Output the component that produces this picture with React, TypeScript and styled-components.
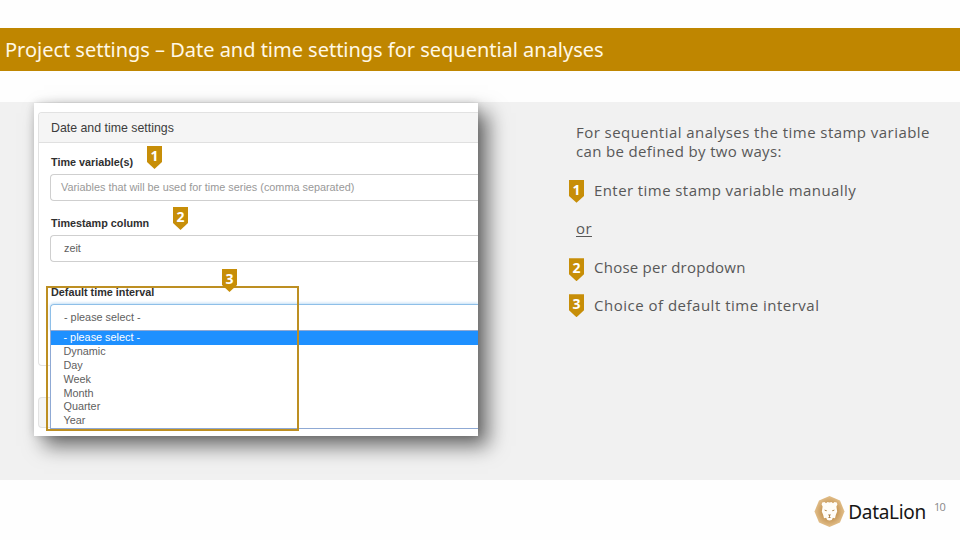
import React from 'react';
import styled, { createGlobalStyle } from 'styled-components';

const GlobalStyle = createGlobalStyle`
  *, *::before, *::after { box-sizing: border-box; }
  body { margin: 0; background: #fff; }
`;

const Slide = styled.main`
  display: flex;
  flex-direction: column;
  width: 960px;
  height: 540px;
  overflow: hidden;
  background: #fefefe;
  font-family: 'Open Sans', 'Noto Sans', sans-serif;
`;

const TitleBar = styled.header`
  display: flex;
  align-items: center;
  height: 43px;
  margin-top: 28px;
  padding: 0 0 0 5px;
  background: #bf8600;
`;

const Title = styled.h1`
  margin: 0;
  color: #fff8e6;
  font: 400 20px/28px 'Noto Sans', sans-serif;
  letter-spacing: -0.02px;
  white-space: nowrap;
`;

const Content = styled.section`
  display: flex;
  align-items: flex-start;
  height: 378px;
  margin-top: 31px;
  padding: 1px 0 0 34px;
  background: #f1f1f1;
`;

const Shot = styled.div`
  position: relative;
  flex: none;
  width: 444px;
  height: 333px;
  background: #fff;
  box-shadow: 10px 10px 19px 0 rgba(0, 0, 0, 0.56), 0 0 8px rgba(0, 0, 0, 0.14);
  font-family: 'Liberation Sans', Arial, sans-serif;
`;

const ShotBody = styled.div`
  display: flex;
  flex-direction: column;
  height: 100%;
  padding: 9px 0 0 4px;
  overflow: hidden;
`;

const Panel = styled.div`
  flex: none;
  height: 254px;
  border: 1px solid #e2e2e2;
  border-right: 0;
  border-radius: 4px 0 0 4px;
`;

const PanelHeader = styled.div`
  height: 30px;
  padding-left: 12px;
  border-bottom: 1px solid #e0e0e0;
  border-top-left-radius: 3px;
  background: #f5f5f5;
  color: #3c3c3c;
  font-size: 12.35px;
  line-height: 30px;
`;

const CollapsedPanel = styled.div`
  flex: none;
  height: 31px;
  margin-top: 31px;
  border: 1px solid #e2e2e2;
  border-right: 0;
  border-radius: 4px 0 0 4px;
  background: #f5f5f5;
`;

const Form = styled.form`
  display: flex;
  flex-direction: column;
  padding: 12px 0 0 12px;
`;

const Field = styled.div<{ $gap?: number }>`
  display: flex;
  flex-direction: column;
  margin-top: ${(p) => p.$gap ?? 0}px;
`;

const Label = styled.label`
  height: 14px;
  margin-bottom: 5px;
  color: #2f2f2f;
  font-size: 10.8px;
  font-weight: 700;
  line-height: 14px;
`;

const Control = styled.div<{ $tone?: 'placeholder' | 'focus' }>`
  height: 27px;
  margin-left: -1px;
  padding-left: ${(p) => (p.$tone === 'placeholder' ? 10 : 13)}px;
  border: 1px solid ${(p) => (p.$tone === 'focus' ? '#8ebfe8' : '#cfcfcf')};
  border-right: 0;
  border-radius: ${(p) => (p.$tone === 'focus' ? '4px 0 0 0' : '4px 0 0 4px')};
  box-shadow: ${(p) => (p.$tone === 'focus' ? '0 -1px 3px rgba(102, 175, 233, 0.4)' : 'none')};
  color: ${(p) => (p.$tone === 'placeholder' ? '#999' : '#606060')};
  font-size: 10.85px;
  line-height: 25px;
  white-space: nowrap;
`;

const Options = styled.ul`
  position: absolute;
  top: 227px;
  left: 16px;
  right: 0;
  height: 99px;
  margin: 0;
  padding: 0;
  border: solid #8fa9d4;
  border-width: 1px 0 1px 1px;
  background: #fff;
  list-style: none;
`;

const Option = styled.li<{ $selected?: boolean }>`
  height: ${(p) => (p.$selected ? 14.2 : 13.8)}px;
  padding-left: 12.5px;
  background: ${(p) => (p.$selected ? '#1e90ff' : 'transparent')};
  color: ${(p) => (p.$selected ? '#fff' : '#606060')};
  font-size: 10.85px;
  line-height: 13.5px;
`;

const Highlight = styled.div`
  position: absolute;
  top: 183px;
  left: 12px;
  width: 253px;
  height: 145px;
  border: 2px solid #bd8f22;
`;

const Marker = styled.span`
  display: flex;
  flex: none;
  justify-content: center;
  width: 15px;
  height: 23px;
  background: #c78e08;
  clip-path: polygon(0 0, 100% 0, 100% 70%, 50% 100%, 0 70%);
  color: #fff;
  font: 700 14px/20px 'Noto Sans', sans-serif;
`;

const PinnedMarker = styled(Marker)<{ $x: number; $y: number }>`
  position: absolute;
  top: ${(p) => p.$y}px;
  left: ${(p) => p.$x}px;
`;

const Notes = styled.div`
  display: flex;
  flex-direction: column;
  margin-left: 98px;
  padding-top: 20px;
  color: #585858;
  font-size: 15px;
  line-height: 19.4px;
`;

const Line = styled.p<{ $spacing: number }>`
  margin: 0;
  letter-spacing: ${(p) => p.$spacing}px;
  white-space: nowrap;
`;

const Step = styled.div<{ $gap: number }>`
  display: flex;
  gap: 10px;
  height: 19px;
  margin: ${(p) => p.$gap}px 0 0 -7px;
`;

const StepMarker = styled(Marker)<{ $lift?: number }>`
  margin-top: ${(p) => -(p.$lift ?? 0)}px;
`;

const Or = styled(Line)`
  margin-top: 19.5px;
  text-decoration: underline;
  text-underline-offset: 2px;
`;

const Footer = styled.footer`
  display: flex;
  align-items: flex-start;
  justify-content: flex-end;
  padding: 15px 15px 0 0;
`;

const Brand = styled.span`
  margin: 4px 0 0 3px;
  color: #161616;
  font: 400 19px/26px 'Noto Sans', sans-serif;
  letter-spacing: -0.3px;
`;

const PageNumber = styled.span`
  margin: 4px 0 0 8px;
  color: #888;
  font-size: 11px;
  letter-spacing: -0.8px;
  line-height: 16px;
`;

const LionLogo = () => (
  <svg width="31" height="33" viewBox="0 0 31 33" aria-hidden="true">
    <defs>
      <radialGradient id="mane">
        <stop offset="0.4" stopColor="#c2914f" />
        <stop offset="1" stopColor="#e3c08c" />
      </radialGradient>
    </defs>
    <path d="M15.5 1 26 5.5 30.5 16.5 26 27.5 15.5 32 5 27.5.5 16.5 5 5.5Z" fill="url(#mane)" />
    <path
      d="M8.2 7.6 10.5 7 12 8.2 13.5 7 15.5 7.6 17.5 7 19 8.2 20.5 7 22.8 7.6 23.4 9.6 22.4 11.6 23.2 16.5 21.8 20 21 23.2 18.9 22.8 17.7 25 15.5 25.6 13.3 25 12.1 22.8 10 23.2 9.2 20 7.8 16.5 8.6 11.6 7.6 9.6Z"
      fill="#fffdf8"
    />
    <path d="M10.4 14.4 13 15.4 12.6 16.3 10.9 15.7ZM20.6 14.4 18 15.4 18.4 16.3 20.1 15.7Z" fill="#b0884f" />
    <path d="M14 19.6h3l-1.1 1.4v1l1.3.5-1.7.4-1.7-.4 1.3-.5v-1Z" fill="#a67b40" />
  </svg>
);

const intervals = ['- please select -', 'Dynamic', 'Day', 'Week', 'Month', 'Quarter', 'Year'];

export default function App() {
  return (
    <>
      <GlobalStyle />
      <Slide>
        <TitleBar>
          <Title>Project settings – Date and time settings for sequential analyses</Title>
        </TitleBar>
        <Content>
          <Shot>
            <ShotBody>
              <Panel>
                <PanelHeader>Date and time settings</PanelHeader>
                <Form>
                  <Field>
                    <Label>Time variable(s)</Label>
                    <Control $tone="placeholder">
                      Variables that will be used for time series (comma separated)
                    </Control>
                  </Field>
                  <Field $gap={15}>
                    <Label>Timestamp column</Label>
                    <Control>zeit</Control>
                  </Field>
                  <Field $gap={23}>
                    <Label>Default time interval</Label>
                    <Control $tone="focus">- please select -</Control>
                  </Field>
                </Form>
              </Panel>
              <CollapsedPanel />
            </ShotBody>
            <Options>
              {intervals.map((name, i) => (
                <Option key={name} $selected={i === 0}>{name}</Option>
              ))}
            </Options>
            <Highlight />
            <PinnedMarker $x={113} $y={43}>1</PinnedMarker>
            <PinnedMarker $x={139} $y={104}>2</PinnedMarker>
            <PinnedMarker $x={188} $y={166}>3</PinnedMarker>
          </Shot>
          <Notes>
            <Line $spacing={0.45}>For sequential analyses the time stamp variable</Line>
            <Line $spacing={0.35}>can be defined by two ways:</Line>
            <Step $gap={19}>
              <StepMarker $lift={1}>1</StepMarker>
              <Line $spacing={0.42}>Enter time stamp variable manually</Line>
            </Step>
            <Or $spacing={0.4}>or</Or>
            <Step $gap={19.5}>
              <StepMarker>2</StepMarker>
              <Line $spacing={0.24}>Chose per dropdown</Line>
            </Step>
            <Step $gap={19}>
              <StepMarker $lift={2}>3</StepMarker>
              <Line $spacing={0.5}>Choice of default time interval</Line>
            </Step>
          </Notes>
        </Content>
        <Footer>
          <LionLogo />
          <Brand>DataLion</Brand>
          <PageNumber>10</PageNumber>
        </Footer>
      </Slide>
    </>
  );
}
